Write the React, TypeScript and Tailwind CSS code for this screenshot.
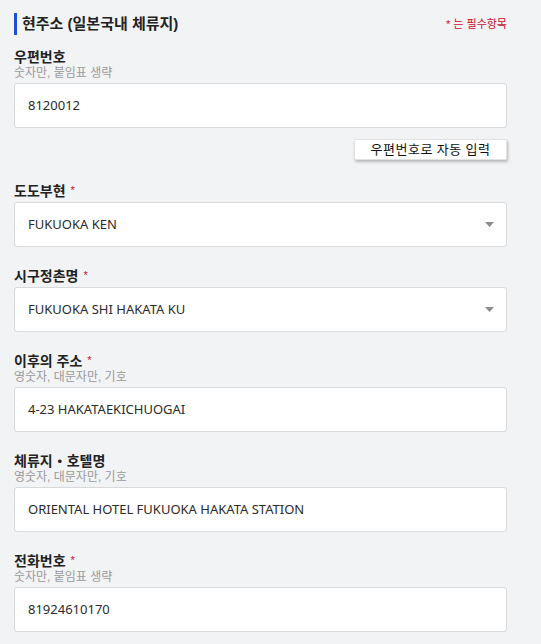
import * as React from 'react'

interface Field {
  label: string
  required?: boolean
  hint?: string
  value: string
  select?: boolean
}

const fields: Field[] = [
  { label: '도도부현', required: true, value: 'FUKUOKA KEN', select: true },
  { label: '시구정촌명', required: true, value: 'FUKUOKA SHI HAKATA KU', select: true },
  { label: '이후의 주소', required: true, hint: '영숫자, 대문자만, 기호', value: '4-23 HAKATAEKICHUOGAI' },
  { label: '체류지・호텔명', hint: '영숫자, 대문자만, 기호', value: 'ORIENTAL HOTEL FUKUOKA HAKATA STATION' },
  { label: '전화번호', required: true, hint: '숫자만, 붙임표 생략', value: '81924610170' },
]

const labelFont = { fontFamily: '"Liberation Sans", "Noto Sans CJK KR", sans-serif' }

function Label({ field }: { field: Field }) {
  return (
    <div style={labelFont}>
      <div className="flex items-start text-[14px] font-bold leading-[18px] text-[#222]">
        {field.label}
        {field.required ? <span className="ml-[5px] text-[11px] font-normal leading-[16px] text-[#c8102e]">*</span> : null}
      </div>
      {field.hint ? <div className="text-[12px] leading-[14px] text-[#9a9a9a]">{field.hint}</div> : null}
    </div>
  )
}

function Box({ field }: { field: Field }) {
  return (
    <div
      className={
        'flex h-[45px] items-center justify-between rounded-[3px] border border-[#d8d9db] bg-white pl-[13px] pr-[11px] text-[13px] text-[#2b2b2b] ' +
        (field.hint ? 'mt-[3px]' : 'mt-[2px]')
      }
    >
      <span>{field.value}</span>
      {field.select ? (
        <svg width="9" height="5" viewBox="0 0 9 5" className="mr-px">
          <path d="M0 0 L9 0 L4.5 5 Z" fill="#8c8c8c" />
        </svg>
      ) : null}
    </div>
  )
}

export default function App() {
  return (
    <div
      className="min-h-[644px] bg-[#f2f3f5] pb-6 pl-[14px] pr-[34px]"
      style={{ fontFamily: '"Noto Sans", "Noto Sans CJK KR", sans-serif' }}
    >
      <div className="flex items-center justify-between pt-[13px]" style={labelFont}>
        <div className="flex h-[22px] items-center border-l-[3px] border-[#1a4fd6] pl-[5px] text-[15px] font-bold leading-[22px] text-[#222]">
          현주소 (일본국내 체류지)
        </div>
        <div className="text-[11px] leading-[14px] text-[#c8102e]">* 는 필수항목</div>
      </div>

      <div className="mt-[13px]">
        <Label field={{ label: '우편번호', hint: '숫자만, 붙임표 생략', value: '' }} />
        <Box field={{ label: '우편번호', hint: '숫자만, 붙임표 생략', value: '8120012' }} />
        <div className="mt-[11px] flex justify-end">
          <button className="h-[21px] w-[153px] rounded-[2px] border border-[#e2e2e2] bg-white text-[13px] leading-[19px] tracking-[0.5px] text-[#111] shadow-[1px_2px_3px_rgba(0,0,0,0.25)]">
            우편번호로 자동 입력
          </button>
        </div>
      </div>

      {fields.map((f, idx) => (
        <div key={idx} className={idx === 0 ? 'mt-[22px]' : 'mt-5'}>
          <Label field={f} />
          <Box field={f} />
        </div>
      ))}
    </div>
  )
}
